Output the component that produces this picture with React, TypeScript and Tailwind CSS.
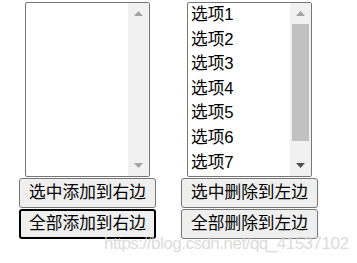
import React from "react";

const FONT = '"Liberation Sans", "Noto Sans CJK SC", sans-serif';

function Scrollbar({ thumb, upDark, downDark }: { thumb: boolean; upDark: boolean; downDark: boolean }) {
  return (
    <div className="flex w-[21px] shrink-0 flex-col bg-[#f1f1f1]">
      <div className="flex h-[21px] items-center justify-center">
        <svg width="9" height="5" viewBox="0 0 9 5">
          <polygon points="0,5 9,5 4.5,0" fill={upDark ? "#505050" : "#a3a3a3"} />
        </svg>
      </div>
      <div className="flex-1 px-[2px]">
        {thumb && <div className="h-[117px] w-full bg-[#c1c1c1]" />}
      </div>
      <div className="flex h-[21px] items-center justify-center">
        <svg width="9" height="5" viewBox="0 0 9 5">
          <polygon points="0,0 9,0 4.5,5" fill={downDark ? "#505050" : "#a3a3a3"} />
        </svg>
      </div>
    </div>
  );
}

function ListBox({ items }: { items: string[] }) {
  return (
    <div className="flex h-[175px] w-[125px] border border-[#767676] bg-white rounded-[2px] overflow-hidden">
      <div className="flex flex-1 flex-col">
        {items.map((t) => (
          <div key={t} className="flex h-[24.6px] items-center pl-[3px] text-[16.7px] leading-none text-black">
            {t}
          </div>
        ))}
      </div>
      <Scrollbar thumb={items.length > 0} upDark={false} downDark={items.length > 0} />
    </div>
  );
}

function Btn({ label, focused }: { label: string; focused?: boolean }) {
  return (
    <button
      className={
        "flex h-[30px] w-[137px] items-center justify-center rounded-[3px] bg-[#efefef] text-[16.7px] leading-none text-black " +
        (focused ? "border-2 border-black" : "border border-[#767676]")
      }
      style={{ fontFamily: FONT }}
    >
      {label}
    </button>
  );
}

export default function App() {
  const opts = ["选项1", "选项2", "选项3", "选项4", "选项5", "选项6", "选项7"];
  return (
    <div className="relative h-[263px] w-[357px] bg-white" style={{ fontFamily: FONT }}>
      <div className="flex gap-[25px] pl-[19px] pt-[2px]">
        <div className="flex w-[137px] flex-col items-center">
          <ListBox items={[]} />
          <div className="mt-[1px] flex flex-col gap-[1px]">
            <Btn label="选中添加到右边" />
            <Btn label="全部添加到右边" focused />
          </div>
        </div>
        <div className="flex w-[137px] flex-col items-center">
          <ListBox items={opts} />
          <div className="mt-[1px] flex flex-col gap-[1px]">
            <Btn label="选中删除到左边" />
            <Btn label="全部删除到左边" />
          </div>
        </div>
      </div>
      <div
        className="pointer-events-none absolute left-[104px] top-[235px] whitespace-nowrap text-[17px] leading-none tracking-[-0.5px] text-[#d2d2d2]/80"
        style={{ fontFamily: '"Liberation Sans", sans-serif' }}
      >
        https://blog.csdn.net/qq_41537102
      </div>
    </div>
  );
}
